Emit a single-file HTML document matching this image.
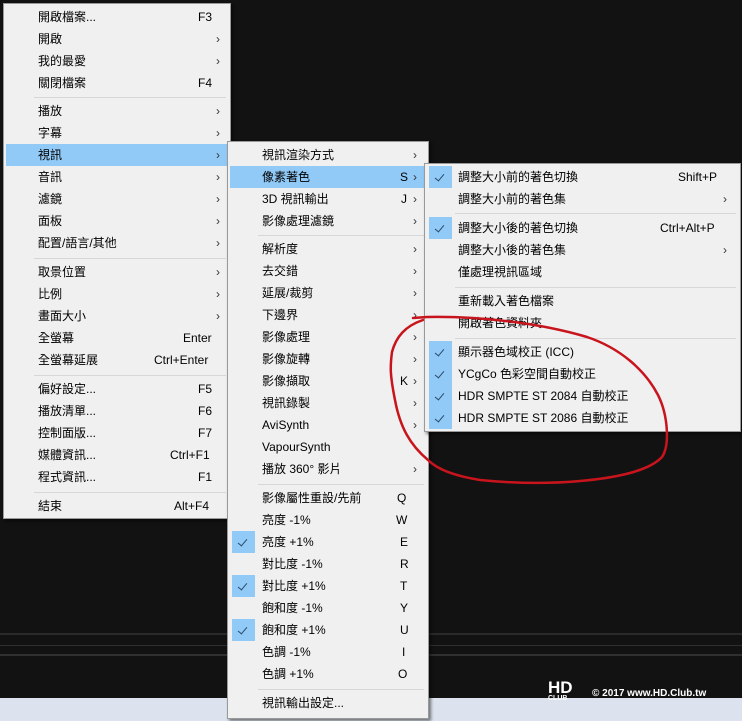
<!DOCTYPE html><html><head><meta charset="utf-8"><style>
*{margin:0;padding:0;box-sizing:border-box}
body{width:742px;height:721px;background:#121212;position:relative;overflow:hidden;font-family:"Liberation Sans","Noto Sans CJK TC",sans-serif;font-size:12px;color:#000}
.m{position:absolute;background:#f0f0f0;border:1px solid #999;box-shadow:2px 2px 3px rgba(0,0,0,.5)}
.i{position:absolute;left:2px;right:2px;height:22px;line-height:22px}
.i .t{position:absolute}
.i .k{position:absolute;text-align:right}
.i .a{position:absolute;font-size:12px;color:#333}
.h{background:#91c9f7}
.c{position:absolute;left:2px;top:0;width:23px;height:22px;background:#91c9f7}
.c::after{content:"";position:absolute;left:8px;top:6px;width:4px;height:8px;border-right:1.3px solid #2a4a6a;border-bottom:1.3px solid #2a4a6a;transform:rotate(40deg)}
.s{position:absolute;height:1px;background:#d7d7d7}
</style></head><body>
<div style="position:absolute;left:0;top:633px;width:742px;height:2px;background:#2a2a2a"></div>
<div style="position:absolute;left:0;top:645px;width:742px;height:1px;background:#2e2e2e"></div>
<div style="position:absolute;left:0;top:654px;width:742px;height:2px;background:#303030"></div>
<div style="position:absolute;left:0;top:698px;width:742px;height:23px;background:#dce3ee"></div>
<div style="position:absolute;left:548px;top:681px;width:42px;height:19px;color:#fff;font-weight:bold;font-size:17px;line-height:14px">HD<div style="font-size:7px;line-height:7px">CLUB</div></div>
<div style="position:absolute;left:592px;top:688px;color:#fff;font-size:10px;font-weight:bold">© 2017 www.HD.Club.tw</div>

<div class="m" style="left:3px;top:3px;width:228px;height:516px">
<div class="i" style="top:2px"><span class="t" style="left:32px">開啟檔案...</span><span class="k" style="left:192px">F3</span></div>
<div class="i" style="top:24px"><span class="t" style="left:32px">開啟</span><span class="a" style="left:210px">›</span></div>
<div class="i" style="top:46px"><span class="t" style="left:32px">我的最愛</span><span class="a" style="left:210px">›</span></div>
<div class="i" style="top:68px"><span class="t" style="left:32px">關閉檔案</span><span class="k" style="left:192px">F4</span></div>
<div class="s" style="left:30px;right:4px;top:93px"></div>
<div class="i" style="top:96px"><span class="t" style="left:32px">播放</span><span class="a" style="left:210px">›</span></div>
<div class="i" style="top:118px"><span class="t" style="left:32px">字幕</span><span class="a" style="left:210px">›</span></div>
<div class="i h" style="top:140px"><span class="t" style="left:32px">視訊</span><span class="a" style="left:210px">›</span></div>
<div class="i" style="top:162px"><span class="t" style="left:32px">音訊</span><span class="a" style="left:210px">›</span></div>
<div class="i" style="top:184px"><span class="t" style="left:32px">濾鏡</span><span class="a" style="left:210px">›</span></div>
<div class="i" style="top:206px"><span class="t" style="left:32px">面板</span><span class="a" style="left:210px">›</span></div>
<div class="i" style="top:228px"><span class="t" style="left:32px">配置/語言/其他</span><span class="a" style="left:210px">›</span></div>
<div class="s" style="left:30px;right:4px;top:254px"></div>
<div class="i" style="top:257px"><span class="t" style="left:32px">取景位置</span><span class="a" style="left:210px">›</span></div>
<div class="i" style="top:279px"><span class="t" style="left:32px">比例</span><span class="a" style="left:210px">›</span></div>
<div class="i" style="top:301px"><span class="t" style="left:32px">畫面大小</span><span class="a" style="left:210px">›</span></div>
<div class="i" style="top:323px"><span class="t" style="left:32px">全螢幕</span><span class="k" style="left:177px">Enter</span></div>
<div class="i" style="top:345px"><span class="t" style="left:32px">全螢幕延展</span><span class="k" style="left:148px">Ctrl+Enter</span></div>
<div class="s" style="left:30px;right:4px;top:371px"></div>
<div class="i" style="top:374px"><span class="t" style="left:32px">偏好設定...</span><span class="k" style="left:192px">F5</span></div>
<div class="i" style="top:396px"><span class="t" style="left:32px">播放清單...</span><span class="k" style="left:192px">F6</span></div>
<div class="i" style="top:418px"><span class="t" style="left:32px">控制面版...</span><span class="k" style="left:192px">F7</span></div>
<div class="i" style="top:440px"><span class="t" style="left:32px">媒體資訊...</span><span class="k" style="left:164px">Ctrl+F1</span></div>
<div class="i" style="top:462px"><span class="t" style="left:32px">程式資訊...</span><span class="k" style="left:192px">F1</span></div>
<div class="s" style="left:30px;right:4px;top:488px"></div>
<div class="i" style="top:491px"><span class="t" style="left:32px">結束</span><span class="k" style="left:168px">Alt+F4</span></div>
</div>

<div class="m" style="left:227px;top:141px;width:202px;height:578px">
<div class="i" style="top:2px"><span class="t" style="left:32px">視訊渲染方式</span><span class="a" style="left:183px">›</span></div>
<div class="i h" style="top:24px"><span class="t" style="left:32px">像素著色</span><span class="k" style="left:170px">S</span><span class="a" style="left:183px">›</span></div>
<div class="i" style="top:46px"><span class="t" style="left:32px">3D 視訊輸出</span><span class="k" style="left:171px">J</span><span class="a" style="left:183px">›</span></div>
<div class="i" style="top:68px"><span class="t" style="left:32px">影像處理濾鏡</span><span class="a" style="left:183px">›</span></div>
<div class="s" style="left:30px;right:4px;top:93px"></div>
<div class="i" style="top:96px"><span class="t" style="left:32px">解析度</span><span class="a" style="left:183px">›</span></div>
<div class="i" style="top:118px"><span class="t" style="left:32px">去交錯</span><span class="a" style="left:183px">›</span></div>
<div class="i" style="top:140px"><span class="t" style="left:32px">延展/裁剪</span><span class="a" style="left:183px">›</span></div>
<div class="i" style="top:162px"><span class="t" style="left:32px">下邊界</span><span class="a" style="left:183px">›</span></div>
<div class="i" style="top:184px"><span class="t" style="left:32px">影像處理</span><span class="a" style="left:183px">›</span></div>
<div class="i" style="top:206px"><span class="t" style="left:32px">影像旋轉</span><span class="a" style="left:183px">›</span></div>
<div class="i" style="top:228px"><span class="t" style="left:32px">影像擷取</span><span class="k" style="left:170px">K</span><span class="a" style="left:183px">›</span></div>
<div class="i" style="top:250px"><span class="t" style="left:32px">視訊錄製</span><span class="a" style="left:183px">›</span></div>
<div class="i" style="top:272px"><span class="t" style="left:32px">AviSynth</span><span class="a" style="left:183px">›</span></div>
<div class="i" style="top:294px"><span class="t" style="left:32px">VapourSynth</span></div>
<div class="i" style="top:316px"><span class="t" style="left:32px">播放 360° 影片</span><span class="a" style="left:183px">›</span></div>
<div class="s" style="left:30px;right:4px;top:342px"></div>
<div class="i" style="top:345px"><span class="t" style="left:32px">影像屬性重設/先前</span><span class="k" style="left:167px">Q</span></div>
<div class="i" style="top:367px"><span class="t" style="left:32px">亮度 -1%</span><span class="k" style="left:166px">W</span></div>
<div class="i" style="top:389px"><span class="c"></span><span class="t" style="left:32px">亮度 +1%</span><span class="k" style="left:170px">E</span></div>
<div class="i" style="top:411px"><span class="t" style="left:32px">對比度 -1%</span><span class="k" style="left:170px">R</span></div>
<div class="i" style="top:433px"><span class="c"></span><span class="t" style="left:32px">對比度 +1%</span><span class="k" style="left:170px">T</span></div>
<div class="i" style="top:455px"><span class="t" style="left:32px">飽和度 -1%</span><span class="k" style="left:170px">Y</span></div>
<div class="i" style="top:477px"><span class="c"></span><span class="t" style="left:32px">飽和度 +1%</span><span class="k" style="left:170px">U</span></div>
<div class="i" style="top:499px"><span class="t" style="left:32px">色調 -1%</span><span class="k" style="left:172px">I</span></div>
<div class="i" style="top:521px"><span class="t" style="left:32px">色調 +1%</span><span class="k" style="left:168px">O</span></div>
<div class="s" style="left:30px;right:4px;top:547px"></div>
<div class="i" style="top:550px"><span class="t" style="left:32px">視訊輸出設定...</span></div>
</div>

<div class="m" style="left:424px;top:163px;width:317px;height:269px">
<div class="i" style="top:2px"><span class="c"></span><span class="t" style="left:31px">調整大小前的著色切換</span><span class="k" style="left:251px">Shift+P</span></div>
<div class="i" style="top:24px"><span class="t" style="left:31px">調整大小前的著色集</span><span class="a" style="left:296px">›</span></div>
<div class="s" style="left:30px;right:4px;top:49px"></div>
<div class="i" style="top:53px"><span class="c"></span><span class="t" style="left:31px">調整大小後的著色切換</span><span class="k" style="left:233px">Ctrl+Alt+P</span></div>
<div class="i" style="top:75px"><span class="t" style="left:31px">調整大小後的著色集</span><span class="a" style="left:296px">›</span></div>
<div class="i" style="top:97px"><span class="t" style="left:31px">僅處理視訊區域</span></div>
<div class="s" style="left:30px;right:4px;top:123px"></div>
<div class="i" style="top:126px"><span class="t" style="left:31px">重新載入著色檔案</span></div>
<div class="i" style="top:148px"><span class="t" style="left:31px">開啟著色資料夾</span></div>
<div class="s" style="left:30px;right:4px;top:174px"></div>
<div class="i" style="top:177px"><span class="c"></span><span class="t" style="left:31px">顯示器色域校正 (ICC)</span></div>
<div class="i" style="top:199px"><span class="c"></span><span class="t" style="left:31px">YCgCo 色彩空間自動校正</span></div>
<div class="i" style="top:221px"><span class="c"></span><span class="t" style="left:31px">HDR SMPTE ST 2084 自動校正</span></div>
<div class="i" style="top:243px"><span class="c"></span><span class="t" style="left:31px">HDR SMPTE ST 2086 自動校正</span></div>
</div>

<svg style="position:absolute;left:0;top:0" width="742" height="721"><path d="M413 318 L427 317 C480 316 540 323 587 337 C620 348 645 370 658 395 C668 415 670 445 662 457 C648 472 613 478 580 481 C547 484 510 483 480 480 C455 476 438 470 428 460 C410 445 400 427 395 400 C390 375 390 367 392 352 C396 337 405 326 423 320" fill="none" stroke="#c8141c" stroke-width="2.5" stroke-linecap="round"/></svg>
</body></html>
